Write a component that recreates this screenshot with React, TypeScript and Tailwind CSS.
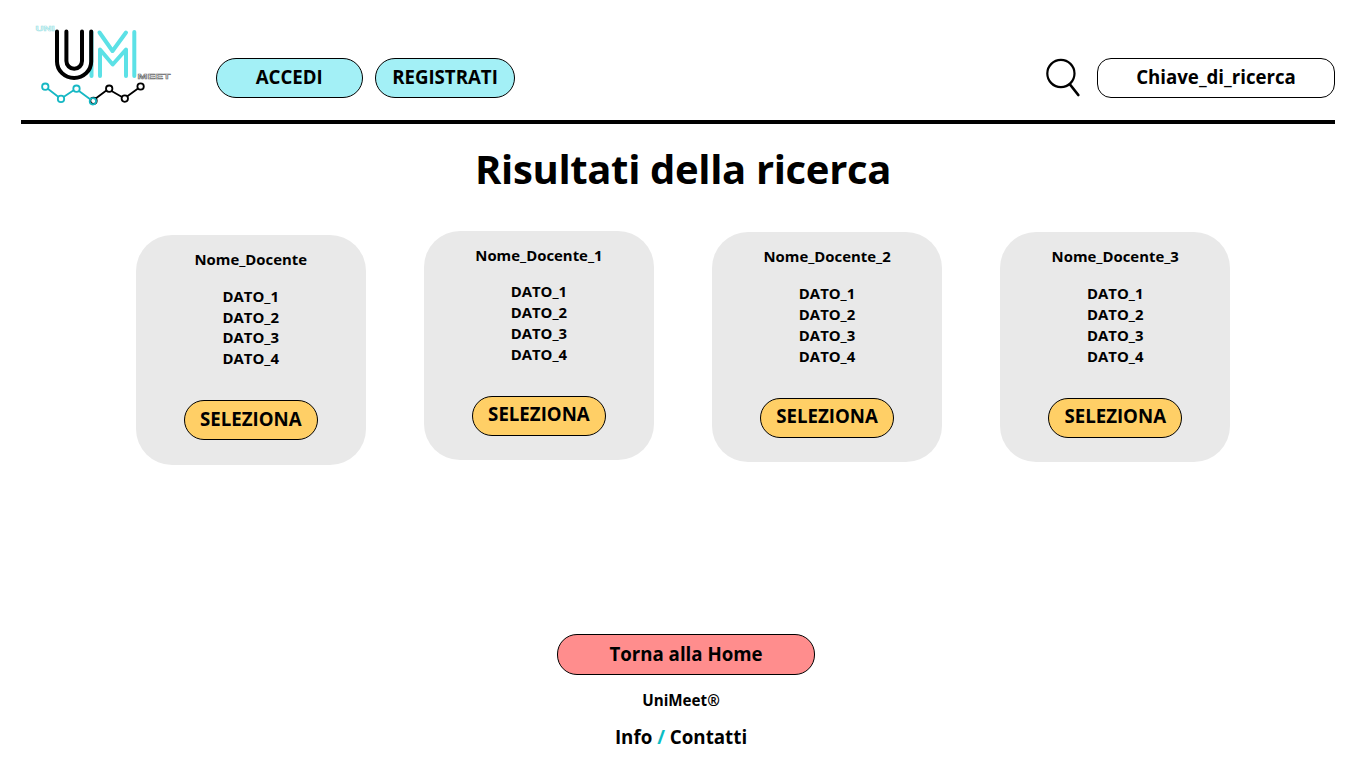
const cards = [
  { name: 'Nome_Docente', offset: 'mt-[4.5px]', top: 'pt-[14px]', gap: 'mt-[16.1px]', action: 'mt-[31px]' },
  { name: 'Nome_Docente_1', offset: 'mt-0', top: 'pt-[14.5px]', gap: 'mt-[15.5px]', action: 'mt-[31.4px]' },
  { name: 'Nome_Docente_2', offset: 'mt-[1.5px]', top: 'pt-[14px]', gap: 'mt-[16.7px]', action: 'mt-[31.2px]' },
  { name: 'Nome_Docente_3', offset: 'mt-[1.5px]', top: 'pt-[14px]', gap: 'mt-[16.7px]', action: 'mt-[31.2px]' },
];

function Logo() {
  return (
    <svg className="ml-[30px] mt-5 h-[90px] w-[150px] shrink-0" viewBox="30 20 150 90" fill="none">
      <g stroke="#5ce1e6" strokeWidth="4" strokeLinecap="round" strokeLinejoin="round">
        <path d="M91.5 32V76" />
        <path d="M99.500 32.500L112.500 51L126 32.500" />
        <path d="M100 76V49.500L112.700 64.500L126 49.500V76" />
        <path d="M134.3 32V76" />
      </g>
      <g stroke="#000" strokeWidth="4" strokeLinecap="round">
        <path d="M57 31.5V61.500A17.100 16.500 0 0 0 91.200 61.500V31.5" />
        <path d="M66.4 31.5V61A7.800 7.800 0 0 0 82 61V31.5" />
      </g>
      <g stroke="#000" strokeWidth="1.8">
        <path d="M95 99L107 90M111.500 91L122 97M127 96.500L138 88.500" />
        <circle cx="109.200" cy="88.700" r="3.200" />
        <circle cx="124.800" cy="98.600" r="3.200" />
        <circle cx="140.600" cy="86.500" r="3.200" />
        <circle cx="93.500" cy="100.800" r="3.200" />
      </g>
      <g stroke="#17b8c4" strokeWidth="1.8">
        <path d="M47.500 88.500L58.500 97M63.500 97L74 90M79 91L90.500 99.500" />
        <circle cx="45.300" cy="86.700" r="3.200" />
        <circle cx="61" cy="98.900" r="3.200" />
        <circle cx="76.500" cy="88.700" r="3.200" />
        <circle cx="92.900" cy="101.300" r="3.200" />
      </g>
      <text x="35.500" y="31" fontFamily="Liberation Sans" fontWeight="700" fontSize="6.500" textLength="19" lengthAdjust="spacingAndGlyphs" fill="#fff" stroke="#9fe3e6" strokeWidth=".5">UNI</text>
      <text x="137.500" y="78.500" fontFamily="Liberation Sans" fontWeight="700" fontSize="7.500" textLength="33" lengthAdjust="spacingAndGlyphs" fill="#fff" stroke="#666" strokeWidth=".5">MEET</text>
    </svg>
  );
}

export default function App() {
  return (
    <div className="flex h-screen w-full flex-col overflow-hidden bg-white font-['Open_Sans',sans-serif] font-bold text-black">
      <header className="flex h-[119.500px] shrink-0 items-start">
        <Logo />
        <button className="ml-[35.500px] mt-[57.500px] h-[40.500px] w-[147.500px] rounded-[20px] border border-black bg-[#a3f0f6] pb-0.5 text-[18.670px]">ACCEDI</button>
        <button className="ml-3 mt-[57.500px] h-[40.500px] w-[140px] rounded-[20px] border border-black bg-[#a3f0f6] pb-0.5 text-[18.670px]">REGISTRATI</button>
        <svg className="ml-auto mt-[55px] h-[45px] w-[40px]" viewBox="1043 55 40 45" fill="none" stroke="#000">
          <circle cx="1060.900" cy="73.500" r="13.600" strokeWidth="2.200" />
          <path d="M1070 84.500L1078.300 95" strokeWidth="2.700" strokeLinecap="round" />
        </svg>
        <div className="ml-[14px] mr-[31px] mt-[57.500px] flex h-[40.500px] w-[238px] items-center justify-center rounded-[14px] border border-black pb-0.5 text-[18.670px]">Chiave_di_ricerca</div>
      </header>
      <div className="ml-[21px] mr-[31px] h-[4px] shrink-0 bg-black" />
      <main className="flex flex-col items-center">
        <h1 className="mt-4 h-[58px] text-[40px] leading-[58px] tracking-[-0.340px]">Risultati della ricerca</h1>
        <section className="mt-[33px] flex h-[403.500px] w-[1094.500px] items-start justify-between">
          {cards.map((card) => (
            <article key={card.name} className={`${card.offset} ${card.top} flex h-[229.6px] w-[230px] flex-col items-center rounded-[36px] bg-[#e9e9e9] text-[14.9px] leading-[20.8px]`}>
              <h2>{card.name}</h2>
              <ul className={`${card.gap} text-center`}>
                <li>DATO_1</li>
                <li>DATO_2</li>
                <li>DATO_3</li>
                <li>DATO_4</li>
              </ul>
              <button className={`${card.action} h-[40px] w-[133.500px] shrink-0 rounded-[20px] border border-black bg-[#ffcf66] pb-0.5 text-[18.670px]`}>SELEZIONA</button>
            </article>
          ))}
        </section>
      </main>
      <footer className="flex flex-col items-center">
        <button className="ml-[6px] h-[41px] w-[258px] rounded-[20px] border border-black bg-[#ff8d8d] pb-px text-[18.670px]">Torna alla Home</button>
        <p className="mr-1 mt-[15px] text-[15.2px] leading-[21px]">UniMeet®</p>
        <nav className="mr-1 mt-[13px] text-[18.750px] leading-[26px]">Info <span className="text-[#0bbdc4]">/</span> Contatti</nav>
      </footer>
    </div>
  );
}
